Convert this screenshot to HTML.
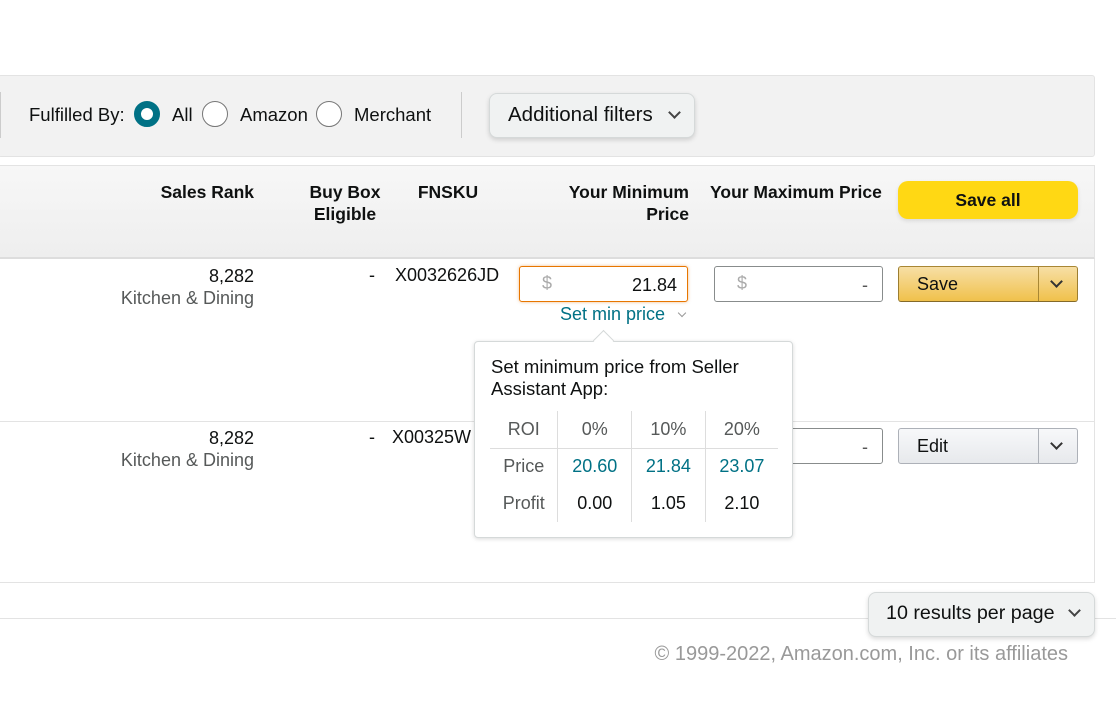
<!DOCTYPE html>
<html><head><style>
*{box-sizing:border-box;margin:0;padding:0}
body{width:1116px;height:712px;background:#fff;font-family:"Liberation Sans",Arial,sans-serif;color:#0f1111;position:relative;overflow:hidden;font-size:18px}
.a{position:absolute}
.bar{left:-2px;top:75px;width:1097px;height:82px;background:#f2f2f2;border:1px solid #e3e3e3;border-radius:3px}
.radio{width:26px;height:26px;border-radius:50%;border:1.5px solid #767676;background:#fff}
.radio.on{border:7px solid #007185}
.thead{left:-2px;top:165px;width:1097px;height:94px;background:linear-gradient(#f7f7f7,#eeeeee);border:1px solid #e3e3e3;border-bottom:2px solid #ddd}
.th{font-weight:bold;font-size:17.5px;line-height:22px;text-align:right}
.row{left:-2px;width:1097px;border:1px solid #e3e3e3;border-top:none}
.inp{height:36px;border:1px solid #888c8c;border-radius:3px;background:#fff}
.btn{height:36px;border:1px solid #adb1b8;border-radius:3px;font-size:18px}
.chev{width:9px;height:9px;border-right:2.5px solid #333;border-bottom:2.5px solid #333;transform:rotate(45deg)}
td{text-align:center;font-size:18px;height:37px}
</style></head><body>
<div class="a bar"></div>
<div class="a" style="left:0;top:92px;width:1px;height:46px;background:#ccc"></div>
<div class="a" style="left:29px;top:104px;font-size:18.5px">Fulfilled By:</div>
<div class="a radio on" style="left:134px;top:101px"></div>
<div class="a" style="left:172px;top:104px;font-size:18.5px">All</div>
<div class="a radio" style="left:202px;top:101px"></div>
<div class="a" style="left:240px;top:104px;font-size:18.5px">Amazon</div>
<div class="a radio" style="left:316px;top:101px"></div>
<div class="a" style="left:354px;top:104px;font-size:18.5px">Merchant</div>
<div class="a" style="left:461px;top:92px;width:1px;height:46px;background:#ccc"></div>
<div class="a" style="left:489px;top:93px;width:206px;height:45px;background:#f0f2f2;border:1px solid #d5d9d9;border-radius:8px;box-shadow:0 2px 5px rgba(0,0,0,.15)"></div>
<div class="a" style="left:508px;top:103px;font-size:20.5px">Additional filters</div>
<div class="a chev" style="left:670px;top:108px;width:9px;height:9px;border-width:2.5px;border-color:#444"></div>

<div class="a thead"></div>
<div class="a th" style="left:130px;top:181px;width:124px">Sales Rank</div>
<div class="a th" style="left:295px;top:181px;width:100px;text-align:center">Buy Box<br>Eligible</div>
<div class="a th" style="left:408px;top:181px;width:80px;text-align:center">FNSKU</div>
<div class="a th" style="left:520px;top:181px;width:169px">Your Minimum<br>Price</div>
<div class="a th" style="left:710px;top:181px;width:180px;text-align:left">Your Maximum Price</div>
<div class="a" style="left:898px;top:181px;width:180px;height:38px;background:#ffd814;border-radius:10px;font-weight:bold;font-size:17.5px;text-align:center;line-height:38px;box-shadow:0 2px 4px rgba(0,0,0,.1)">Save all</div>

<div class="a row" style="top:259px;height:163px"></div>
<div class="a row" style="top:421px;height:162px"></div>

<div class="a" style="left:90px;top:265px;width:164px;text-align:right;line-height:22px">8,282<br><span style="color:#565959">Kitchen &amp; Dining</span></div>
<div class="a" style="left:369px;top:265px">-</div>
<div class="a" style="left:395px;top:265px">X0032626JD</div>
<div class="a inp" style="left:519px;top:266px;width:169px;border-color:#e77600;box-shadow:0 0 3px rgba(228,121,17,.5)"></div>
<div class="a" style="left:542px;top:273px;color:#aaa">$</div>
<div class="a" style="left:590px;top:275px;width:87px;text-align:right">21.84</div>
<div class="a inp" style="left:714px;top:266px;width:169px"></div>
<div class="a" style="left:737px;top:273px;color:#aaa">$</div>
<div class="a" style="left:862px;top:275px;color:#555">-</div>
<div class="a btn" style="left:898px;top:266px;width:180px;background:linear-gradient(#f7dfa5,#f0c14b);border-color:#a88734 #9c7e31 #846a29"></div>
<div class="a" style="left:917px;top:274px">Save</div>
<div class="a" style="left:1038px;top:267px;width:1px;height:34px;background:#a88734"></div>
<div class="a chev" style="left:1052px;top:277px"></div>
<div class="a" style="left:560px;top:304px;color:#007185">Set min price</div>
<div class="a chev" style="left:679px;top:310px;width:6px;height:6px;border-width:1.5px;border-color:#999"></div>

<div class="a" style="left:90px;top:427px;width:164px;text-align:right;line-height:22px">8,282<br><span style="color:#565959">Kitchen &amp; Dining</span></div>
<div class="a" style="left:369px;top:427px">-</div>
<div class="a" style="left:392px;top:427px">X00325W</div>
<div class="a inp" style="left:714px;top:428px;width:169px"></div>
<div class="a" style="left:862px;top:437px;color:#555">-</div>
<div class="a btn" style="left:898px;top:428px;width:180px;background:linear-gradient(#f7f8fa,#e7e9ec)"></div>
<div class="a" style="left:917px;top:436px">Edit</div>
<div class="a" style="left:1038px;top:429px;width:1px;height:34px;background:#adb1b8"></div>
<div class="a chev" style="left:1052px;top:439px"></div>

<div class="a" style="left:474px;top:341px;width:319px;height:197px;background:#fff;border:1px solid #d5d9d9;border-radius:4px;box-shadow:0 1px 4px rgba(0,0,0,.15)"></div>
<div class="a" style="left:596px;top:333px;width:15px;height:15px;background:#fff;border-left:1px solid #d5d9d9;border-top:1px solid #d5d9d9;transform:rotate(45deg)"></div>
<div class="a" style="left:491px;top:356px;font-size:18.5px;line-height:22px">Set minimum price from Seller<br>Assistant App:</div>
<table class="a" style="left:490px;top:411px;width:288px;border-collapse:collapse">
<tr><td style="color:#565959;border-right:1px solid #ddd;border-bottom:1px solid #ddd">ROI</td><td style="color:#565959;border-right:1px solid #ddd;border-bottom:1px solid #ddd">0%</td><td style="color:#565959;border-right:1px solid #ddd;border-bottom:1px solid #ddd">10%</td><td style="color:#565959;border-bottom:1px solid #ddd">20%</td></tr>
<tr><td style="color:#565959;border-right:1px solid #ddd">Price</td><td style="color:#007185;border-right:1px solid #ddd">20.60</td><td style="color:#007185;border-right:1px solid #ddd">21.84</td><td style="color:#007185">23.07</td></tr>
<tr><td style="color:#565959;border-right:1px solid #ddd">Profit</td><td style="border-right:1px solid #ddd">0.00</td><td style="border-right:1px solid #ddd">1.05</td><td>2.10</td></tr>
</table>

<div class="a" style="left:0;top:618px;width:1116px;height:1px;background:#e3e3e3"></div>
<div class="a" style="left:868px;top:592px;width:227px;height:45px;background:#f0f2f2;border:1px solid #d5d9d9;border-radius:8px;box-shadow:0 2px 5px rgba(0,0,0,.15)"></div>
<div class="a" style="left:886px;top:602px;font-size:19.7px">10 results per page</div>
<div class="a chev" style="left:1070px;top:606px;width:9px;height:9px;border-width:2.5px;border-color:#444"></div>
<div class="a" style="left:560px;top:643px;width:508px;text-align:right;color:#999;font-size:20px">© 1999-2022, Amazon.com, Inc. or its affiliates</div>
</body></html>
